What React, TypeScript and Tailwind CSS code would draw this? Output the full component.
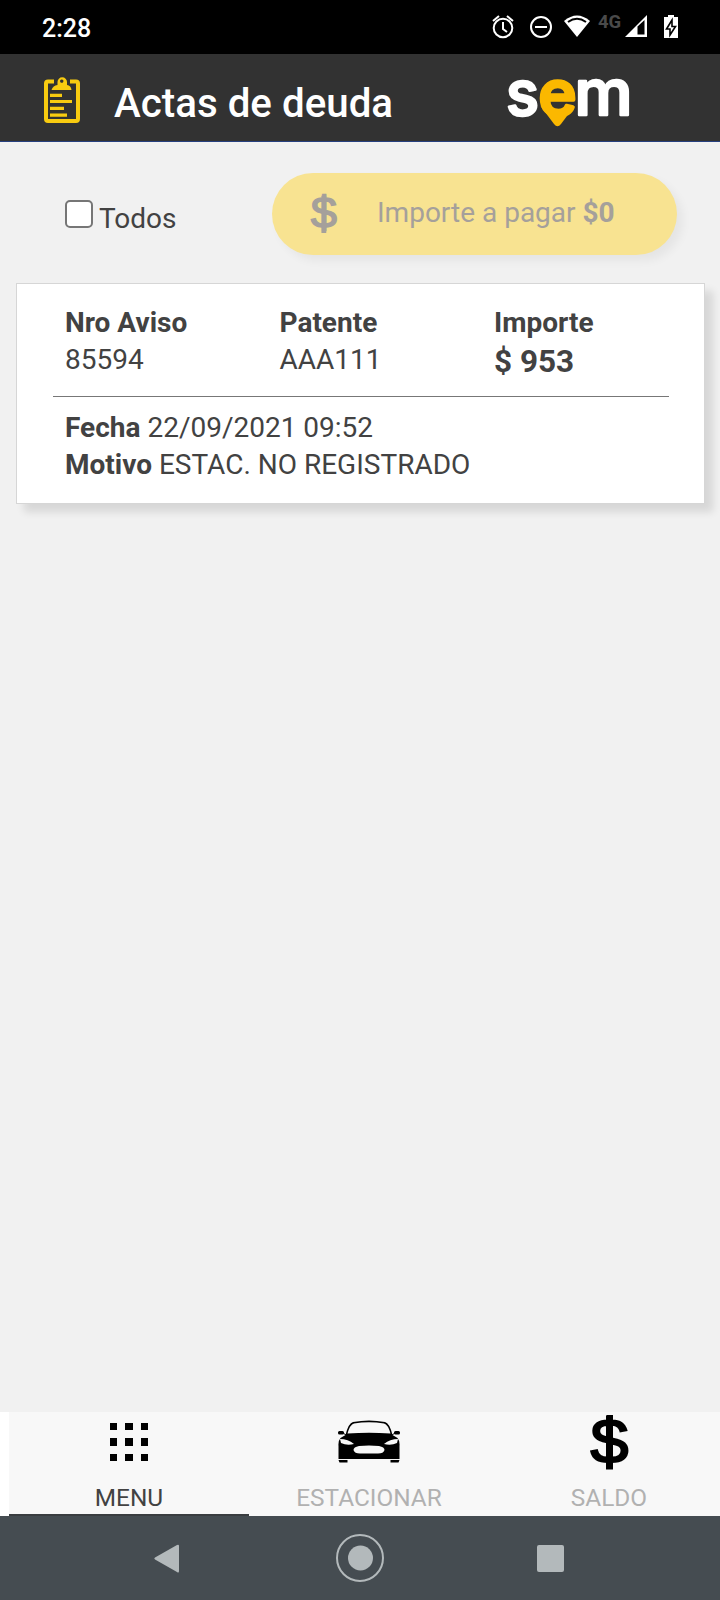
import React from "react";

type Notice = {
  id: string;
  plate: string;
  amount: number;
  date: string;
  reason: string;
};

type TabProps = {
  label: string;
  active?: boolean;
  children: React.ReactNode;
};

const notices: Notice[] = [
  {
    id: "85594",
    plate: "AAA111",
    amount: 953,
    date: "22/09/2021 09:52",
    reason: "ESTAC. NO REGISTRADO",
  },
];

function StatusBar() {
  return (
    <div className="flex h-[54px] items-center bg-black pl-[42px] text-white">
      <span className="flex-1 pt-1 text-[25px] leading-8 font-medium">2:28</span>
      <svg width="250" height="54" viewBox="0 0 250 54" fill="none">
        <g stroke="#fff" strokeWidth="2">
          <circle cx="33" cy="28" r="9.300" />
          <path d="M33 22v7l4 3M23 21l6-5M43 21l-6-5" />
          <circle cx="71" cy="27" r="10" />
          <path d="M65 27h12" />
        </g>
        <path d="M94 21Q107 10 120 21L107 37Z" fill="#fff" />
        <path d="M98 22Q107 15.500 116 22" stroke="#000" strokeWidth="2" />
        <text x="128" y="28" fontSize="18.500" fontWeight="700" fill="#4a4a4a">
          4G
        </text>
        <path d="M155 37L177 15V37Z" fill="#fff" />
        <path d="M167.500 26.500L174.500 20V34.500H167.500Z" fill="#000" />
        <path d="M194 17h4v-2h6v2h4v21h-14z" fill="#fff" />
        <path d="M202 20L196.500 29H200V35L205.500 26.500H202Z" fill="#fff" stroke="#000" strokeWidth="1.600" />
      </svg>
    </div>
  );
}

function ClipboardIcon() {
  return (
    <svg width="38" height="48" viewBox="0 0 38 48" fill="none">
      <path d="M11 5.500H5Q3 5.500 3 7.500V43Q3 45 5 45H33Q35 45 35 43V7.500Q35 5.500 33 5.500H27" stroke="#f8cb10" strokeWidth="4" />
      <path
        d="M8.500 14Q10 9.500 14.500 9V6A4.700 4.700 0 0 1 24 6V9Q28 9.500 28.500 14ZM18.700 3.400a1.700 1.700 0 1 0 .1 0Z"
        fill="#f8cb10"
        fillRule="evenodd"
      />
      <path d="M7 19.300H19M7 25.500H29M7 32.300H21M7 39.200H24" stroke="#f8cb10" strokeWidth="3.200" />
    </svg>
  );
}

function Logo() {
  return (
    <svg
      width="132"
      height="87"
      viewBox="0 0 132 87"
      fontFamily="Inter, sans-serif"
      fontWeight="500"
      fontSize="62"
      strokeWidth="2.500"
      strokeLinejoin="round"
    >
      <text x="3" y="60.500" textLength="33" lengthAdjust="spacingAndGlyphs" fill="#fff" stroke="#fff">
        s
      </text>
      <text x="71.500" y="60.500" textLength="58" lengthAdjust="spacingAndGlyphs" fill="#fff" stroke="#fff">
        m
      </text>
      <path d="M37.500 52L51 70Q54.500 74.500 58 70L70 54Q54 62 37.500 52Z" fill="#fbb800" />
      <text x="35.500" y="60.500" textLength="38" lengthAdjust="spacingAndGlyphs" fill="#fbb800" stroke="#fbb800" strokeWidth="3.500">
        e
      </text>
    </svg>
  );
}

function CarIcon() {
  return (
    <svg width="64" height="44" viewBox="0 0 64 44">
      <path d="M8.500 15Q11.500 3 16 2Q32 -1 48 2Q52.500 3 55.500 15L60.500 18Q63 21 62.500 26V39H1.500V26Q1 21 3.500 18Z" />
      <path d="M10.500 13.500Q13 4.500 17 3.500Q32 1 47 3.500Q51 4.500 53.500 13.500Q32 12 10.500 13.500Z" fill="#f8f8f8" />
      <path d="M3 19Q11 19 17 24Q10 26 4 23ZM61 19Q53 19 47 24Q54 26 60 23Z" fill="#f8f8f8" />
      <path d="M22 26Q32 25 42 26Q47.500 27 47.500 30Q46.500 33.500 41 33.500H23Q17.500 33.500 16.500 30Q16.500 27 22 26Z" fill="#f8f8f8" />
      <rect x="1" y="11" width="6" height="3.500" rx="1.500" />
      <rect x="57" y="11" width="6" height="3.500" rx="1.500" />
      <path d="M6 13l3 2M58 13l-3 2" stroke="#000" />
      <path d="M1.500 40h9v2.500h-8zM53.500 40h9l-1 2.500h-8z" />
    </svg>
  );
}

function DollarIcon({ className }: { className: string }) {
  return (
    <svg className={className} viewBox="-2 -10 44 84" fill="currentColor">
      <text
        x="1.500"
        y="52.500"
        fontFamily="Liberation Sans, sans-serif"
        fontSize="63"
        stroke="currentColor"
        strokeWidth="2"
        textLength="38"
        lengthAdjust="spacingAndGlyphs"
      >
        $
      </text>
      <rect x="17" y="5.500" width="7" height="54" />
    </svg>
  );
}

function MenuIcon() {
  return (
    <div className="grid grid-cols-3 gap-2">
      {Array.from({ length: 9 }, (_, i) => (
        <span key={i} className="size-[7.5px] bg-black" />
      ))}
    </div>
  );
}

function Tab({ label, active, children }: TabProps) {
  return (
    <div
      className={
        active
          ? "flex w-60 shrink-0 flex-col items-center border-b-2 border-[#3a3d40] text-[#424242]"
          : "flex w-60 shrink-0 flex-col items-center border-b-2 border-transparent text-[#b1b1b1]"
      }
    >
      <div className="flex h-[60px] items-center">{children}</div>
      <span className="mt-3 text-[24.4px] leading-7">{label}</span>
    </div>
  );
}

function NoticeCard({ notice }: { notice: Notice }) {
  return (
    <div className="mr-[15px] ml-4 h-[221px] border border-[#d6d6d6] bg-white pt-5 pr-[35px] pl-9 text-[28px] leading-[37px] shadow-[8px_8px_8px_#0000001c]">
      <div className="flex h-[93px] border-b border-[#777] pl-3">
        <div className="w-[214.5px]">
          <b>Nro Aviso</b>
          <p>{notice.id}</p>
        </div>
        <div className="w-[214.5px]">
          <b>Patente</b>
          <p>{notice.plate}</p>
        </div>
        <div>
          <b>Importe</b>
          <p className="text-[31.5px] leading-[41px] font-bold">$ {notice.amount}</p>
        </div>
      </div>
      <div className="pt-3 pl-3">
        <p>
          <b>Fecha</b> {notice.date}
        </p>
        <p>
          <b>Motivo</b> {notice.reason}
        </p>
      </div>
    </div>
  );
}

export default function App() {
  return (
    <div className="flex h-[1600px] w-[720px] flex-col overflow-hidden bg-[#f1f1f1] font-[Roboto,sans-serif] text-[#424242]">
      <StatusBar />
      <header className="flex h-[88px] shrink-0 border-b border-[#27407f] bg-[#323232] pl-[43px]">
        <div className="pt-[22px]">
          <ClipboardIcon />
        </div>
        <h1 className="ml-[33px] w-[389px] pt-[26px] text-[40.3px] leading-[47px] font-medium text-white">Actas de deuda</h1>
        <Logo />
      </header>

      <div className="flex h-[141px] shrink-0 pt-[31px] pl-[65px]">
        <label className="flex w-[207px]">
          <span className="mt-[27px] size-7 rounded-[5px] border-2 border-[#767676] bg-white" />
          <span className="mt-[27px] ml-[6px] text-[28px] leading-[37px]">Todos</span>
        </label>
        <button className="flex h-[82px] w-[405px] rounded-full bg-[#f8e391] text-[#a5a09b] shadow-[6px_6px_10px_#0000000d]">
          <DollarIcon className="mt-[12px] ml-9 h-[58px] w-[31px]" />
          <span className="mt-[21px] ml-[38px] text-[28px] leading-[37px]">
            Importe a pagar <b>$0</b>
          </span>
        </button>
      </div>

      <main className="flex-1">
        {notices.map((notice) => (
          <NoticeCard key={notice.id} notice={notice} />
        ))}
      </main>

      <nav className="flex h-[104px] shrink-0 bg-white pl-[9px]">
        <div className="flex bg-[#f8f8f8]">
          <Tab label="MENU" active>
            <MenuIcon />
          </Tab>
          <Tab label="ESTACIONAR">
            <CarIcon />
          </Tab>
          <Tab label="SALDO">
            <DollarIcon className="h-[84px] w-11 shrink-0 text-black" />
          </Tab>
        </div>
      </nav>

      <div className="h-[84px] shrink-0 bg-[#454c51]">
        <svg width="720" height="84" viewBox="0 0 720 84" fill="#b3b9bb">
          <path d="M155 41.500L177 29Q179 28 179 30V55Q179 57.500 177 56L155 43.500Q153.500 42.500 155 41.500Z" />
          <circle cx="360" cy="42" r="23" fill="none" stroke="#b3b9bb" strokeWidth="2" />
          <circle cx="360.500" cy="42" r="12.500" />
          <rect x="537" y="29" width="27" height="27" rx="2" />
        </svg>
      </div>
    </div>
  );
}
